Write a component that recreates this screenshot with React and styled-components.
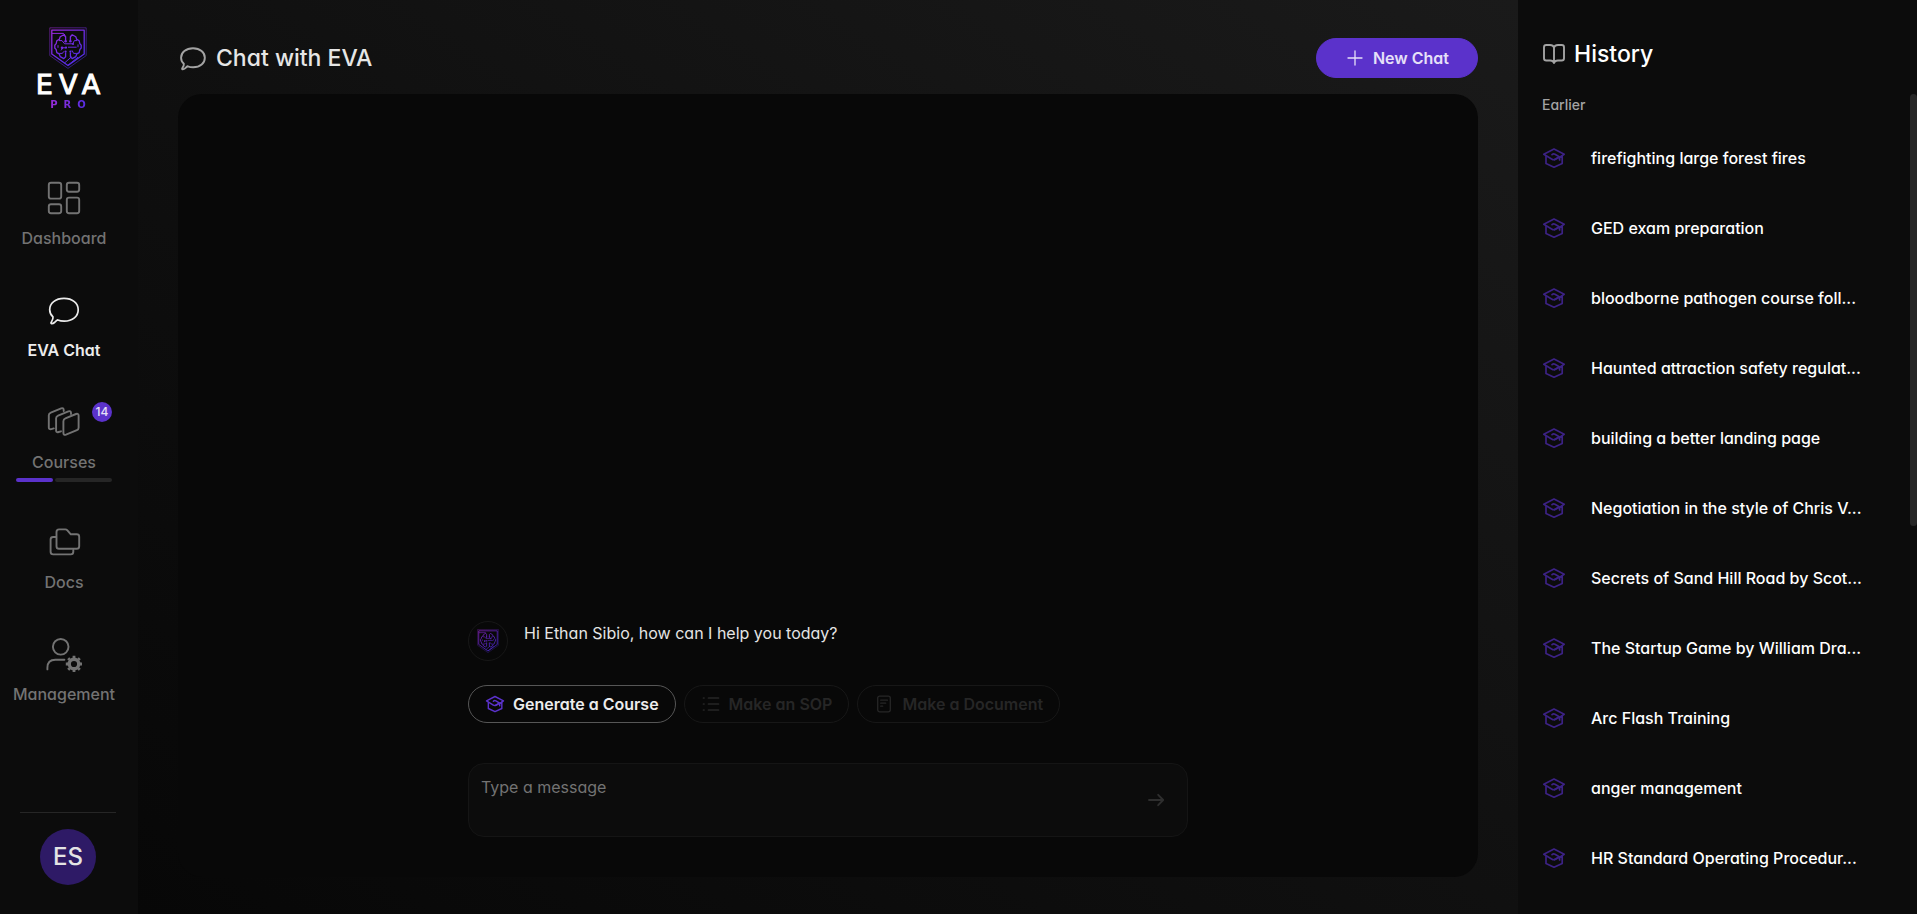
import { useState } from "react";
import styled, { createGlobalStyle } from "styled-components";

const GlobalStyle = createGlobalStyle`
  *, *::before, *::after {
    box-sizing: border-box;
  }
  body {
    margin: 0;
    background: #080808;
    color: #ffffff;
    font-family: Inter, "Liberation Sans", sans-serif;
    font-feature-settings: "cv11" 1;
    font-size: 16px;
    line-height: 24px;
  }
  button, textarea {
    font: inherit;
    font-feature-settings: inherit;
    color: inherit;
  }
  h1, h2, h3, p, ul {
    margin: 0;
    padding: 0;
  }
`;

const Page = styled.div`
  display: flex;
  height: 100vh;
  min-height: 800px;
`;

/* ---------- sidebar ---------- */

const Sidebar = styled.aside`
  display: flex;
  flex-direction: column;
  flex: 0 0 138px;
  padding: 27px 0 29px;
  background: #0c0c0c;
`;

const Logo = styled.a`
  display: flex;
  flex-direction: column;
  align-items: center;
  width: 136px;
  color: #ffffff;
  text-decoration: none;
`;

const LogoName = styled.span`
  margin-top: 4px;
  padding-left: 6px;
  font: 27px/24px "DejaVu Sans", sans-serif;
  letter-spacing: 6px;
  -webkit-text-stroke: 1px #ffffff;
`;

const LogoTag = styled.span`
  margin-top: 2px;
  padding-left: 6px;
  font: bold 10px/12px "DejaVu Sans", sans-serif;
  letter-spacing: 6px;
  background: linear-gradient(90deg, #a42cd6, #4c2ee6);
  background-clip: text;
  color: transparent;
`;

const Nav = styled.nav`
  display: flex;
  flex-direction: column;
  gap: 42px;
  width: 128px;
  margin-top: 69px;
`;

const NavItem = styled.a`
  position: relative;
  display: flex;
  flex-direction: column;
  align-items: center;
  color: ${({ $active }) => ($active ? "#ececec" : "#737373")};
  font-weight: ${({ $active }) => ($active ? 600 : 500)};
  text-decoration: none;

  svg {
    margin-bottom: 10px;
  }
`;

const Badge = styled.span`
  position: absolute;
  top: -2px;
  right: 16px;
  width: 20px;
  height: 20px;
  border-radius: 10px;
  background: #5b32cb;
  color: #e6e0f8;
  font-size: 12px;
  font-weight: 500;
  line-height: 20px;
  text-align: center;
`;

const Progress = styled.span`
  display: flex;
  gap: 2px;
  width: 96px;
  height: 4px;
  margin-top: 4px;
`;

const ProgressPart = styled.span`
  flex: ${({ $share }) => $share} 1 0;
  border-radius: 2px;
  background: ${({ $filled }) => ($filled ? "#5b32cb" : "#262626")};
`;

const Account = styled.div`
  display: flex;
  justify-content: center;
  width: 96px;
  margin: auto 0 0 20px;
  padding-top: 16px;
  border-top: 1px solid #262626;
`;

const Avatar = styled.button`
  width: 56px;
  height: 56px;
  padding: 0;
  border: 0;
  border-radius: 50%;
  background: #2e1a66;
  color: #e4e4e4;
  font-size: 24px;
  font-weight: 500;
`;

/* ---------- chat ---------- */

const Main = styled.main`
  display: flex;
  flex: 1;
  flex-direction: column;
  min-width: 0;
  padding: 38px 40px 37px;
  background: linear-gradient(to top right, #070707, #101010 50%, #1a1a1a);
`;

const Header = styled.header`
  display: flex;
  align-items: center;
  justify-content: space-between;
  margin-bottom: 16px;
`;

const Title = styled.h1`
  display: flex;
  align-items: center;
  gap: 8px;
  color: #e6e6e6;
  font-size: 23px;
  font-weight: 500;
  line-height: 32px;

  svg {
    color: #a3a3a3;
  }
`;

const NewChat = styled.button`
  display: flex;
  align-items: center;
  gap: 8px;
  height: 40px;
  padding: 0 28px;
  border: 1px solid #5b32cb;
  border-radius: 20px;
  background: #5b32cb;
  color: #e6e0f8;
  font-weight: 600;
`;

const Panel = styled.section`
  display: flex;
  flex: 1;
  flex-direction: column;
  align-items: center;
  justify-content: flex-end;
  padding: 40px;
  border-radius: 24px;
  background: #080808;
`;

const Conversation = styled.div`
  width: min(100%, 720px);
`;

const Message = styled.div`
  display: flex;
  gap: 16px;
  margin-bottom: 24px;
  color: #e4e4e4;
`;

const BotAvatar = styled.span`
  display: grid;
  place-items: center;
  width: 40px;
  height: 40px;
  border: 1px solid #171717;
  border-radius: 50%;

  svg {
    opacity: 0.9;
  }
`;

const Actions = styled.div`
  display: flex;
  flex-wrap: wrap;
  gap: 8px;
  margin-bottom: 40px;
`;

const Action = styled.button`
  display: flex;
  align-items: center;
  gap: 8px;
  padding: 6px 16px;
  border: 1px solid #565656;
  border-radius: 20px;
  background: transparent;
  color: #ececec;
  font-weight: 600;

  svg {
    color: #5b32cb;
  }

  &:disabled {
    border-color: #171717;
    color: #262626;

    svg {
      color: #262626;
    }
  }
`;

const Composer = styled.form`
  display: flex;
  align-items: center;
  padding-right: 20px;
  border: 1px solid #151515;
  border-radius: 16px;
  background: #0c0c0c;
`;

const MessageBox = styled.textarea`
  flex: 1;
  height: 72px;
  padding: 11px 12px;
  border: 0;
  outline: 0;
  background: transparent;
  resize: none;

  &::placeholder {
    color: #737373;
  }
`;

const Send = styled.button`
  display: grid;
  padding: 0;
  border: 0;
  background: transparent;
  color: #2e2e2e;
`;

/* ---------- history ---------- */

const HistoryPanel = styled.aside`
  position: relative;
  flex: 0 0 399px;
  padding: 38px 24px 0;
  overflow: hidden;
  background: #0c0c0c;
`;

const HistoryTitle = styled.h2`
  display: flex;
  align-items: center;
  gap: 8px;
  margin-bottom: 24px;
  font-size: 23px;
  font-weight: 500;
  line-height: 32px;

  svg {
    color: #a3a3a3;
  }
`;

const GroupLabel = styled.h3`
  color: #a3a3a3;
  font-size: 14px;
  font-weight: 500;
  line-height: 22px;
`;

const HistoryList = styled.ul`
  padding-top: 7px;
  list-style: none;
`;

const HistoryLink = styled.a`
  display: flex;
  align-items: center;
  gap: 25px;
  height: 70px;
  color: #ffffff;
  font-weight: 500;
  text-decoration: none;
  white-space: nowrap;

  svg {
    color: #3c2285;
  }
`;

const ScrollThumb = styled.div`
  position: absolute;
  top: 94px;
  right: 0;
  width: 7px;
  height: 432px;
  border-radius: 4px;
  background: #262626;
`;

/* ---------- icons ---------- */

const Icon = ({ w = 36, box = `0 0 ${w} ${w}`, stroke = 1.9, children }) => (
  <svg
    width={w}
    height={w}
    viewBox={box}
    fill="none"
    stroke="currentColor"
    strokeWidth={stroke}
    strokeLinecap="round"
    strokeLinejoin="round"
    aria-hidden="true"
  >
    {children}
  </svg>
);

const Shield = ({ w = 38, h = 42, id }) => (
  <svg width={w} height={h} viewBox="0 0 38 42" fill="none" aria-hidden="true">
    <defs>
      <linearGradient id={id} x1="0" y1="0" x2="32" y2="38" gradientUnits="userSpaceOnUse">
        <stop offset="0" stopColor="#a629dc" />
        <stop offset="0.6" stopColor="#6a2be6" />
        <stop offset="1" stopColor="#4c2ee6" />
      </linearGradient>
    </defs>
    <g stroke={`url(#${id})`} strokeLinejoin="round">
      <path d="M.8.8h36.4v27.8L19 41.4.8 28.6z" opacity=".5" />
      <path d="M2.8 3.2h32.4V27L19 38.5 2.8 27z" strokeWidth="1.3" />
      <path d="M3 6.4h11.4l1.8 1.8M15.5 36l7-6.2M19 38.2l10-8" />
      <path
        d="M16.6 14V9.8l-1.8-2-3.6 2-1 2.6-2.4 1.4-.6 2.8-1.4 1.6v2.8l1.4 1.6.6 3 2.4 1.2 1 2.8 3.6 2 1.8-1.8v-4.2"
        strokeWidth="1.3"
      />
      <path
        d="M21.4 14V9.8l1.8-2 3.6 2 1 2.6 2.4 1.4.6 2.8 1.4 1.6v2.8l-1.4 1.6-.6 3-2.4 1.2-1 2.8-3.6 2-1.8-1.8v-4.2"
        strokeWidth="1.3"
      />
      <path d="M10 13.6h3l2.6 3.2H23M9 18.2v2.6M12 23.4l2-2.6h3.4M19 20.2h8.6M28 13.6h-2.6L23.6 17M10.4 26.4h3l1.4-2M27.6 26.4h-3l-1.6-3M29 17.4v2.8" />
    </g>
    <g fill={`url(#${id})`}>
      <circle cx="16.6" cy="14.2" r="1.2" />
      <circle cx="21.4" cy="14.2" r="1.2" />
      <circle cx="24" cy="17" r="1.1" />
      <circle cx="13" cy="20.8" r="1.2" />
      <circle cx="17" cy="20.6" r="1.1" />
      <circle cx="16.6" cy="24.6" r="1.1" />
      <circle cx="21.4" cy="24.6" r="1.1" />
    </g>
  </svg>
);

const DashboardIcon = () => (
  <Icon>
    <rect x="2.8" y="2.8" width="12.4" height="15.8" rx="2.2" />
    <rect x="20.8" y="2.8" width="12.4" height="9" rx="2.2" />
    <rect x="2.8" y="24.2" width="12.4" height="9" rx="2.2" />
    <rect x="20.8" y="17.6" width="12.4" height="15.6" rx="2.2" />
  </Icon>
);

const ChatIcon = ({ size, stroke }) => (
  <Icon w={size} box="-.8 -2.800 38 38" stroke={stroke}>
    <path d="M18.2 3.9c9 0 15 5.2 15 12s-5.800 12-14.800 12c-2.800 0-4.800-.4-6.800-1.200-1.200.3-2.400 1.700-3.500 2.700-.9.800-2 1.200-3.100 1.100-.6-.1-.7-.7-.4-1.200 1-1.600 2.400-3.600 2-5.800-2.300-2-3.500-4.600-3.500-7.600 0-6.800 6.100-12 15.100-12z" />
  </Icon>
);

const CoursesIcon = () => (
  <Icon>
    <path d="M19.4 14.4 30 10c1.600-.6 2.600 0 2.600 1.600V23.800c0 1.200-.6 2-1.700 2.400l-10.900 4.400c-1.600.6-2.600 0-2.600-1.600V17.200c0-1.400.7-2.300 2-2.800z" />
    <path d="M15 27.300l-2.400.7c-1.600.5-2.500-.1-2.500-1.600V14.300c0-1.300.7-2.200 2-2.700L22.400 7.400c1.600-.6 2.600 0 2.600 1.600v1" />
    <path d="M7.800 24.400l-2.400.7c-1.600.4-2.600-.2-2.600-1.700V11.300c0-1.300.7-2.200 2-2.700L15.200 4.400c1.500-.6 2.500 0 2.500 1.600v1" />
  </Icon>
);

const DocsIcon = () => (
  <Icon>
    <path d="M10.5 8c0-1.700.8-2.600 2.500-2.600h6.200c1 0 1.600.3 2.200 1L24.800 10.300h5.800c1.700 0 2.600.8 2.600 2.400v9.500c0 1.700-.9 2.600-2.600 2.600H13c-1.700 0-2.500-.9-2.500-2.600z" />
    <path d="M10 13H7.200C5.500 13 4.600 13.800 4.600 15.500v12.300c0 1.700.9 2.600 2.600 2.600h17.600c1.700 0 2.500-.9 2.500-2.600V26" />
  </Icon>
);

const ManagementIcon = () => (
  <Icon>
    <circle cx="14.7" cy="10.8" r="7.8" />
    <path d="M1.4 33.4v-1.600c0-5.200 2.800-8 8-8h9" />
    <circle cx="28" cy="28" r="4.800" strokeWidth="3.400" />
    <path
      d="M28 22v-2.200M28 36.200V34M22 28h-2.200M36.200 28H34M23.800 23.800l-1.600-1.600M33.800 33.800l-1.600-1.600M23.800 32.200l-1.600 1.600M33.800 22.200l-1.600 1.600"
      strokeWidth="2.800"
      strokeLinecap="butt"
    />
  </Icon>
);

const CourseIcon = ({ size = 24 }) => (
  <Icon w={size} box="0 0 24 24" stroke={1.7}>
    <path d="M20 9.800l2.200-1.500L12 3 1.800 8.300l8.200 5c1 .6 2 .6 3 0l2.600-1.500" />
    <path d="M4 10.400v7L12 21.200l8.200-3.800V9.800l-7.600 4" />
    <path d="M10 8.600c1-.9 2-.9 3-.4l4.600 2.800v3" />
  </Icon>
);

const ListIcon = () => (
  <Icon w={20} stroke={1.7}>
    <path d="M7.500 4h10M7.500 10h10M7.500 16h10M2.500 4h.5M2.500 10h.5M2.500 16h.5" />
  </Icon>
);

const DocumentIcon = () => (
  <Icon w={20} stroke={1.3}>
    <rect x="3.7" y="2.2" width="12.6" height="15.6" rx="2" />
    <path d="M6.700 6.200h6.800M6.700 9.200h5M6.700 12.200h2" />
  </Icon>
);

const PlusIcon = () => (
  <Icon w={20} stroke={1.3}>
    <path d="M10 3v14M3 10h14" />
  </Icon>
);

const ArrowIcon = () => (
  <Icon w={20} stroke={1.9}>
    <path d="M2 10h14M11.200 4.800 16.200 10l-5 5.200" />
  </Icon>
);

const BookIcon = () => (
  <Icon w={24}>
    <path d="M12 5.400C11.400 3.700 10 3 8 3H4.300C2.800 3 2 3.800 2 5.300V16.200c0 1.500.8 2.300 2.300 2.300H8.200c2 0 3.300.8 3.800 2.600.5-1.800 1.800-2.600 3.800-2.600h3.900c1.500 0 2.300-.8 2.300-2.300V5.300C22 3.800 21.200 3 19.700 3H16c-2 0-3.400.7-4 2.400zV21" />
  </Icon>
);

const conversations = [
  "firefighting large forest fires",
  "GED exam preparation",
  "bloodborne pathogen course foll...",
  "Haunted attraction safety regulat...",
  "building a better landing page",
  "Negotiation in the style of Chris V...",
  "Secrets of Sand Hill Road by Scot...",
  "The Startup Game by William Dra...",
  "Arc Flash Training",
  "anger management",
  "HR Standard Operating Procedur...",
];

const App = () => {
  const [message, setMessage] = useState("");

  return (
    <Page>
      <GlobalStyle />
      <Sidebar>
        <Logo href="#">
          <Shield id="logo-shield" />
          <LogoName>EVA</LogoName>
          <LogoTag>PRO</LogoTag>
        </Logo>
        <Nav>
          <NavItem href="#dashboard">
            <DashboardIcon />
            Dashboard
          </NavItem>
          <NavItem href="#chat" $active>
            <ChatIcon size={36} stroke={1.8} />
            EVA Chat
          </NavItem>
          <NavItem href="#courses">
            <CoursesIcon />
            Courses
            <Badge>14</Badge>
            <Progress>
              <ProgressPart $share={37} $filled />
              <ProgressPart $share={57} />
            </Progress>
          </NavItem>
          <NavItem href="#docs">
            <DocsIcon />
            Docs
          </NavItem>
          <NavItem href="#management">
            <ManagementIcon />
            Management
          </NavItem>
        </Nav>
        <Account>
          <Avatar type="button">ES</Avatar>
        </Account>
      </Sidebar>

      <Main>
        <Header>
          <Title>
            <ChatIcon size={30} stroke={2.4} />
            Chat with EVA
          </Title>
          <NewChat type="button" onClick={() => setMessage("")}>
            <PlusIcon />
            New Chat
          </NewChat>
        </Header>
        <Panel>
          <Conversation>
            <Message>
              <BotAvatar>
                <Shield id="bot-shield" w={22} h={24} />
              </BotAvatar>
              <p>Hi Ethan Sibio, how can I help you today?</p>
            </Message>
            <Actions>
              <Action type="button">
                <CourseIcon size={20} />
                Generate a Course
              </Action>
              <Action type="button" disabled>
                <ListIcon />
                Make an SOP
              </Action>
              <Action type="button" disabled>
                <DocumentIcon />
                Make a Document
              </Action>
            </Actions>
            <Composer onSubmit={(e) => e.preventDefault()}>
              <MessageBox
                aria-label="Message"
                placeholder="Type a message"
                value={message}
                onChange={(e) => setMessage(e.target.value)}
              />
              <Send type="submit" aria-label="Send">
                <ArrowIcon />
              </Send>
            </Composer>
          </Conversation>
        </Panel>
      </Main>

      <HistoryPanel>
        <HistoryTitle>
          <BookIcon />
          History
        </HistoryTitle>
        <GroupLabel>Earlier</GroupLabel>
        <HistoryList>
          {conversations.map((name) => (
            <li key={name}>
              <HistoryLink href="#">
                <CourseIcon />
                {name}
              </HistoryLink>
            </li>
          ))}
        </HistoryList>
        <ScrollThumb />
      </HistoryPanel>
    </Page>
  );
};

export default App;
